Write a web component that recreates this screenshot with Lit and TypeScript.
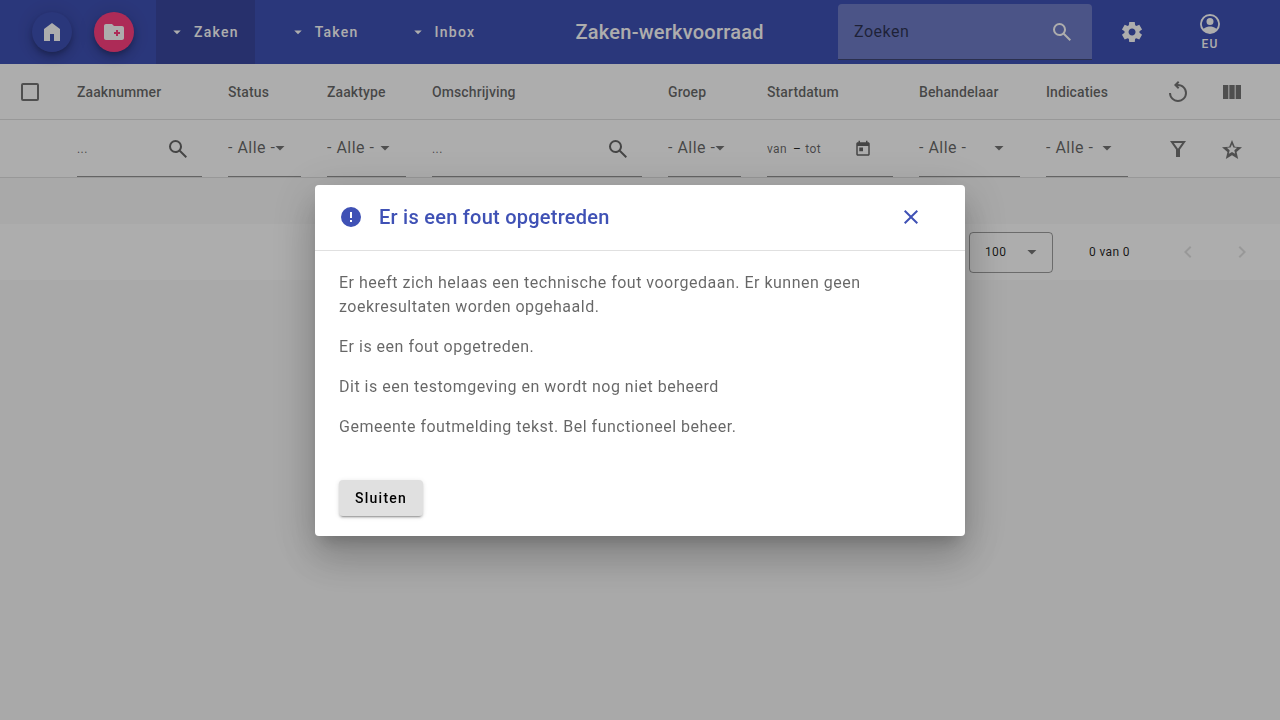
import { LitElement, html, css, svg } from "lit";
import { customElement, property } from "lit/decorators.js";

const ICONS: Record<string, string> = {
  home: "M4 21V9l8-6 8 6v12h-6v-7h-4v7z",
  newFolder:
    "M20 6h-8l-2-2H4c-1.1 0-2 .9-2 2v12c0 1.100.9 2 2 2h16c1.100 0 2-.9 2-2V8c0-1.100-.9-2-2-2zM14 16v-2h-2v-2h2v-2h2v2h2v2h-2v2z",
  dropDown: "M7 10l5 5 5-5z",
  search:
    "M19.6 21l-6.3-6.3q-.75.6-1.725.95T9.5 16q-2.725 0-4.612-1.888T3 9.5t1.888-4.612T9.5 3t4.613 1.888T16 9.5q0 1.100-.35 2.075T14.7 13.3l6.3 6.3zM9.5 14q1.875 0 3.188-1.312T14 9.5t-1.312-3.188T9.5 5 6.313 6.313 5 9.5t1.313 3.188T9.5 14z",
  settings:
    "M9.25 22l-.4-3.2q-.325-.125-.612-.3t-.563-.375L4.7 19.375l-2.75-4.75 2.575-1.95Q4.5 12.5 4.5 12.337v-.675q0-.162.025-.337L1.95 9.375l2.75-4.75 2.975 1.25q.275-.2.575-.375t.6-.3l.4-3.2h5.5l.4 3.2q.325.125.613.3t.562.375l2.975-1.250 2.750 4.750-2.575 1.950q.025.175.025.337v.675q0 .163-.05.338l2.575 1.950-2.750 4.750-2.950-1.250q-.275.2-.575.375t-.6.3l-.4 3.200zm2.8-6.500q1.450 0 2.475-1.025T15.550 12t-1.025-2.475T12.050 8.500q-1.475 0-2.487 1.025T8.550 12t1.013 2.475T12.050 15.500z",
  account:
    "M12 2a10 10 0 100 20 10 10 0 000-20zM12 4a8 8 0 016.350 12.860C16.900 15.100 13.400 14.500 12 14.500s-4.900.6-6.350 2.360A8 8 0 0112 4zM12 6a3.500 3.500 0 100 7 3.500 3.500 0 000-7z",
  reset:
    "M12 22q-1.875 0-3.513-.713t-2.850-1.924-1.925-2.850T3 13h2q0 2.925 2.038 4.963T12 20t4.963-2.037T19 13t-2.037-4.962T12 6h-.15l1.550 1.550L12 9 8 5l4-4 1.400 1.450L11.850 4H12q1.875 0 3.513.713t2.850 1.925 1.925 2.850T21 13t-.712 3.513-1.925 2.850-2.850 1.925T12 22z",
  columns: "M3 5h5.330v14H3zM9.330 5h5.340v14H9.330zM15.670 5H21v14h-5.330z",
  filter: "M4 4h16l-6 8.500V20h-4v-7.500zM7.860 6L12 11.860 16.140 6z",
  star:
    "M8.850 16.825L12 14.925l3.150 1.925-.825-3.600 2.775-2.400-3.650-.325L12 7.125l-1.450 3.375-3.650.325 2.775 2.425zM5.825 22l1.625-7.025L2 10.250l7.200-.625L12 3l2.800 6.625 7.200.625-5.450 4.725L18.175 22 12 18.275z",
  calendar:
    "M19 3h-1V1h-2v2H8V1H6v2H5c-1.100 0-2 .9-2 2v14c0 1.100.9 2 2 2h14c1.100 0 2-.9 2-2V5c0-1.100-.9-2-2-2zm0 16H5V8h14zM7 10h5v5H7z",
  prev: "M15.410 7.410L14 6l-6 6 6 6 1.410-1.410L10.830 12z",
  next: "M10 6L8.590 7.410 13.170 12l-4.580 4.590L10 18l6-6z",
  error:
    "M12 2a10 10 0 100 20 10 10 0 000-20zM11 7h2v6h-2zM11 15h2v2h-2z",
  close:
    "M6.400 19L5 17.600l5.600-5.600L5 6.400 6.400 5l5.600 5.600L17.600 5 19 6.400 13.400 12l5.600 5.600-1.400 1.400-5.600-5.600z",
};

@customElement("app-icon")
class AppIcon extends LitElement {
  @property() name = "";

  static styles = css`
    :host {
      display: inline-block;
      flex: none;
      width: var(--icon-size, 24px);
      height: var(--icon-size, 24px);
    }
    .glyph {
      display: block;
      width: 100%;
      height: 100%;
      fill: currentColor;
      fill-rule: evenodd;
    }
  `;

  render() {
    return html`<svg class="glyph" viewBox="0 0 24 24" aria-hidden="true">
      ${svg`<path d=${ICONS[this.name] ?? ""}></path>`}
    </svg>`;
  }
}

type Filter = "text" | "select" | "dates";
const COLUMNS: { label: string; filter: Filter; size: string }[] = [
  { label: "Zaaknummer", filter: "text", size: "number" },
  { label: "Status", filter: "select", size: "narrow" },
  { label: "Zaaktype", filter: "select", size: "type" },
  { label: "Omschrijving", filter: "text", size: "fill" },
  { label: "Groep", filter: "select", size: "narrow" },
  { label: "Startdatum", filter: "dates", size: "dates" },
  { label: "Behandelaar", filter: "select", size: "handler" },
  { label: "Indicaties", filter: "select", size: "flags" },
];

@customElement("app-root")
class AppRoot extends LitElement {
  static styles = css`
    :host {
      display: block;
      min-height: 100vh;
      background: #fafafa;
      color: rgba(0, 0, 0, 0.87);
      font: 400 16px/24px Roboto, sans-serif;
      letter-spacing: 0.03125em;
    }
    * {
      box-sizing: border-box;
    }
    button,
    input,
    select {
      margin: 0;
      padding: 0;
      border: 0;
      border-radius: 0;
      background: none;
      color: inherit;
      font: inherit;
      letter-spacing: inherit;
      outline: none;
    }
    button {
      cursor: pointer;
    }
    input {
      min-width: 0;
    }
    input::placeholder {
      color: inherit;
      opacity: 1;
    }
    select {
      appearance: none;
      min-width: 0;
      flex: 1;
    }

    .toolbar {
      display: flex;
      align-items: center;
      height: 64px;
      padding: 0 34px 0 32px;
      background: #3f51b5;
      color: #fff;
    }
    .actions {
      display: flex;
      align-items: center;
      gap: 22px;
    }
    .fab {
      display: grid;
      place-items: center;
      width: 40px;
      height: 40px;
      border-radius: 50%;
      box-shadow: 0 3px 5px -1px rgba(0, 0, 0, 0.2),
        0 6px 10px 0 rgba(0, 0, 0, 0.14), 0 1px 18px 0 rgba(0, 0, 0, 0.12);
    }
    .fab-primary {
      background: #3f51b5;
    }
    .fab-accent {
      background: #ff4081;
    }
    .menu {
      --icon-size: 18px;
      display: flex;
      align-items: center;
      gap: 8px;
      height: 64px;
      padding: 0 16px 0 12px;
      font-size: 14px;
      font-weight: 500;
      letter-spacing: 0.0892857em;
    }
    .menu-active {
      background: #3a48a0;
    }
    .title {
      flex: 1;
      margin: 0;
      padding-left: 10px;
      text-align: center;
      font-size: 20px;
      font-weight: 500;
      letter-spacing: 0.0125em;
      white-space: nowrap;
    }
    .search {
      display: flex;
      align-items: center;
      width: 254px;
      height: 56px;
      padding-left: 16px;
      padding-right: 6px;
      border-radius: 4px 4px 0 0;
      border-bottom: 1px solid rgba(0, 0, 0, 0.42);
      background: rgba(255, 255, 255, 0.25);
    }
    .search-input {
      flex: 1;
      color: rgba(0, 0, 0, 0.6);
    }
    .icon-button {
      display: grid;
      place-items: center;
      flex: none;
      width: 48px;
      height: 48px;
    }
    .settings {
      margin: 0 18px 0 16px;
    }
    .user {
      display: flex;
      flex-direction: column;
      align-items: center;
      width: 72px;
      font-size: 12px;
      line-height: 16px;
      font-weight: 500;
      letter-spacing: 0.0892857em;
    }

    .cases {
      width: 100%;
      table-layout: fixed;
      border-collapse: separate;
      border-spacing: 0;
      background: #fff;
      color: rgba(0, 0, 0, 0.6);
    }
    .col-check {
      width: 64px;
    }
    .col-number {
      width: 151px;
    }
    .col-narrow {
      width: 99px;
    }
    .col-type {
      width: 105px;
    }
    .col-dates {
      width: 152px;
    }
    .col-handler {
      width: 127px;
    }
    .col-flags {
      width: 108px;
    }
    .col-tools {
      width: 139px;
    }
    .cell {
      padding: 0 13px;
      border-bottom: 1px solid rgba(0, 0, 0, 0.12);
      text-align: left;
      vertical-align: middle;
    }
    .head {
      height: 56px;
      font-size: 14px;
      font-weight: 500;
      letter-spacing: 0.0071428em;
    }
    .cell-check {
      padding: 0 0 0 21px;
    }
    .check {
      display: block;
      appearance: none;
      width: 18px;
      height: 18px;
      border: 2px solid rgba(0, 0, 0, 0.54);
      border-radius: 2px;
    }
    .cell-tools {
      padding-right: 24px;
    }
    .tools {
      display: flex;
      justify-content: flex-end;
      gap: 6px;
      color: rgba(0, 0, 0, 0.54);
    }
    .field {
      display: flex;
      align-items: center;
      height: 57px;
      border-bottom: 1px solid rgba(0, 0, 0, 0.42);
    }
    .field-select {
      padding-right: 16px;
    }
    .arrow {
      flex: none;
      width: 10px;
      height: 5px;
      background: rgba(0, 0, 0, 0.54);
      clip-path: polygon(0 0, 100% 0, 50% 100%);
    }
    .small {
      padding-top: 2px;
      font-size: 12px;
      letter-spacing: 0.0333333em;
    }
    .grow {
      flex: 1;
    }
    .date-from {
      width: 26px;
    }
    .dash {
      color: rgba(0, 0, 0, 0.87);
    }
    .date-to {
      flex: 1;
      padding-left: 4px;
    }
    .date-button {
      --icon-size: 18px;
      width: 60px;
    }

    .paginator {
      display: flex;
      align-items: center;
      justify-content: flex-end;
      height: 56px;
      margin-top: 46px;
      padding-right: 14px;
      background: #fff;
      font-size: 12px;
      letter-spacing: 0.0333333em;
    }
    .page-size {
      display: flex;
      align-items: center;
      width: 84px;
      height: 41px;
      padding: 0 15px;
      border: 1px solid rgba(0, 0, 0, 0.38);
      border-radius: 4px;
    }
    .range {
      margin: 0 34px 0 36px;
    }
    .pages {
      display: flex;
      gap: 6px;
      color: rgba(0, 0, 0, 0.12);
    }

    .scrim {
      position: fixed;
      inset: 0;
      display: flex;
      align-items: center;
      justify-content: center;
      background: rgba(0, 0, 0, 0.32);
    }
    .dialog {
      width: 650px;
      max-width: 80vw;
      border-radius: 4px;
      background: #fff;
      color: rgba(0, 0, 0, 0.6);
      box-shadow: 0 11px 15px -7px rgba(0, 0, 0, 0.2),
        0 24px 38px 3px rgba(0, 0, 0, 0.14), 0 9px 46px 8px rgba(0, 0, 0, 0.12);
    }
    .dialog-head {
      display: flex;
      align-items: center;
      gap: 16px;
      height: 66px;
      padding: 0 30px 0 24px;
      border-bottom: 1px solid rgba(0, 0, 0, 0.12);
      color: #3f51b5;
    }
    .dialog-title {
      flex: 1;
      margin: 0;
      font-size: 20px;
      font-weight: 500;
      letter-spacing: 0.0125em;
    }
    .dialog-body {
      padding: 20px 24px;
    }
    .message {
      margin: 0 0 16px;
    }
    .dialog-actions {
      padding: 5px 24px 20px;
    }
    .close-button {
      display: block;
      height: 36px;
      padding: 0 16px;
      border-radius: 4px;
      background: #e0e0e0;
      color: #000;
      font-size: 14px;
      font-weight: 500;
      letter-spacing: 0.0892857em;
      box-shadow: 0 3px 1px -2px rgba(0, 0, 0, 0.2),
        0 2px 2px 0 rgba(0, 0, 0, 0.14), 0 1px 5px 0 rgba(0, 0, 0, 0.12);
    }
  `;

  private filterField(label: string, kind: Filter) {
    if (kind === "select") {
      return html`<label class="field field-select">
        <select aria-label=${label}>
          <option>- Alle -</option>
        </select>
        <span class="arrow"></span>
      </label>`;
    }
    if (kind === "dates") {
      return html`<div class="field small">
        <input class="date-from" placeholder="van" aria-label="${label} van" />
        <span class="dash">–</span>
        <input class="date-to" placeholder="tot" aria-label="${label} tot" />
        <button class="icon-button date-button" aria-label="Kalender">
          <app-icon name="calendar"></app-icon>
        </button>
      </div>`;
    }
    return html`<div class="field small">
      <input class="grow" placeholder="..." aria-label=${label} />
      <button class="icon-button" aria-label="Zoek op ${label}">
        <app-icon name="search"></app-icon>
      </button>
    </div>`;
  }

  private iconButton(icon: string, label: string) {
    return html`<button class="icon-button" aria-label=${label}>
      <app-icon name=${icon}></app-icon>
    </button>`;
  }

  render() {
    return html`
      <header class="toolbar">
        <nav class="actions">
          <button class="fab fab-primary" aria-label="Dashboard">
            <app-icon name="home"></app-icon>
          </button>
          <button class="fab fab-accent" aria-label="Zaak aanmaken">
            <app-icon name="newFolder"></app-icon>
          </button>
          ${["Zaken", "Taken", "Inbox"].map(
            (item, i) => html`<button class="menu ${i === 0 ? "menu-active" : ""}">
              <app-icon name="dropDown"></app-icon>${item}
            </button>`
          )}
        </nav>
        <h1 class="title">Zaken-werkvoorraad</h1>
        <div class="search">
          <input class="search-input" placeholder="Zoeken" aria-label="Zoeken" />
          ${this.iconButton("search", "Zoeken")}
        </div>
        <button class="icon-button settings" aria-label="Beheer">
          <app-icon name="settings"></app-icon>
        </button>
        <button class="user"><app-icon name="account"></app-icon>EU</button>
      </header>

      <main>
        <table class="cases">
          <colgroup>
            <col class="col-check" />
            ${COLUMNS.map((c) => html`<col class="col-${c.size}" />`)}
            <col class="col-tools" />
          </colgroup>
          <thead>
            <tr>
              <th class="cell head cell-check">
                <input class="check" type="checkbox" aria-label="Alles selecteren" />
              </th>
              ${COLUMNS.map((c) => html`<th class="cell head">${c.label}</th>`)}
              <th class="cell head cell-tools">
                <div class="tools">
                  ${this.iconButton("reset", "Zoekopdracht wissen")}
                  ${this.iconButton("columns", "Kolommen")}
                </div>
              </th>
            </tr>
            <tr>
              <td class="cell"></td>
              ${COLUMNS.map(
                (c) => html`<td class="cell">${this.filterField(c.label, c.filter)}</td>`
              )}
              <td class="cell cell-tools">
                <div class="tools">
                  ${this.iconButton("filter", "Filters")}
                  ${this.iconButton("star", "Zoekopdracht opslaan")}
                </div>
              </td>
            </tr>
          </thead>
        </table>

        <div class="paginator">
          <label class="page-size">
            <select aria-label="Aantal per pagina">
              <option>100</option>
            </select>
            <span class="arrow"></span>
          </label>
          <span class="range">0 van 0</span>
          <div class="pages">
            ${this.iconButton("prev", "Vorige pagina")}
            ${this.iconButton("next", "Volgende pagina")}
          </div>
        </div>
      </main>

      <div class="scrim">
        <section class="dialog" role="dialog" aria-modal="true" aria-labelledby="dialog-title">
          <header class="dialog-head">
            <app-icon name="error"></app-icon>
            <h2 class="dialog-title" id="dialog-title">Er is een fout opgetreden</h2>
            ${this.iconButton("close", "Dialoog sluiten")}
          </header>
          <div class="dialog-body">
            <p class="message">
              Er heeft zich helaas een technische fout voorgedaan. Er kunnen geen
              zoekresultaten worden opgehaald.
            </p>
            <p class="message">Er is een fout opgetreden.</p>
            <p class="message">Dit is een testomgeving en wordt nog niet beheerd</p>
            <p class="message">Gemeente foutmelding tekst. Bel functioneel beheer.</p>
          </div>
          <div class="dialog-actions">
            <button class="close-button">Sluiten</button>
          </div>
        </section>
      </div>
    `;
  }
}
